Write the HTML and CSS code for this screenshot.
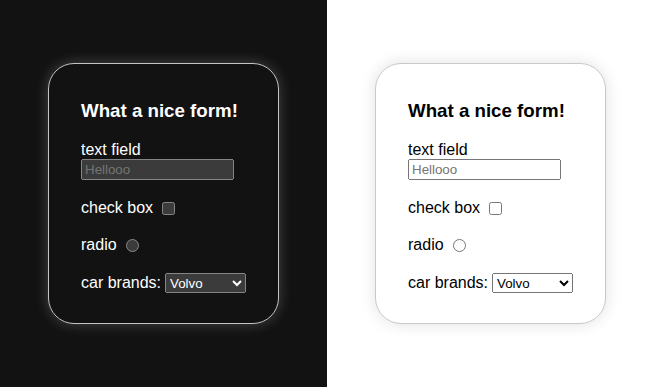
FILE: index.html
```html
<!DOCTYPE html>
<html lang="en">
<head>
    <meta charset="UTF-8">
    <meta name="viewport" content="width=device-width, initial-scale=1.0">
    <title>What a nice form!</title>
    <link rel="stylesheet" href="styles.css">
</head>
<body>
    <div class="halves">
        <section class="half dark">
            <form class="card">
                <h3>What a nice form!</h3>
                <div class="field">
                    <label for="text-dark">text field</label>
                    <input type="text" id="text-dark" placeholder="Hellooo">
                </div>
                <div class="field inline">
                    <label for="check-dark">check box</label>
                    <input type="checkbox" id="check-dark">
                </div>
                <div class="field inline">
                    <label for="radio-dark">radio</label>
                    <input type="radio" id="radio-dark">
                </div>
                <div class="field inline">
                    <label for="cars-dark">car brands:</label>
                    <select id="cars-dark">
                        <option>Volvo</option>
                        <option>Saab</option>
                        <option>Audi</option>
                    </select>
                </div>
            </form>
        </section>

        <section class="half light">
            <form class="card">
                <h3>What a nice form!</h3>
                <div class="field">
                    <label for="text-light">text field</label>
                    <input type="text" id="text-light" placeholder="Hellooo">
                </div>
                <div class="field inline">
                    <label for="check-light">check box</label>
                    <input type="checkbox" id="check-light">
                </div>
                <div class="field inline">
                    <label for="radio-light">radio</label>
                    <input type="radio" id="radio-light">
                </div>
                <div class="field inline">
                    <label for="cars-light">car brands:</label>
                    <select id="cars-light">
                        <option>Volvo</option>
                        <option>Saab</option>
                        <option>Audi</option>
                    </select>
                </div>
            </form>
        </section>
    </div>
</body>
</html>
```

FILE: styles.css
```css
* {
    margin: 0;
    padding: 0;
    box-sizing: border-box;
}

body {
    font-family: 'Liberation Sans', Arial, sans-serif;
    font-size: 16px;
}

.halves {
    display: grid;
    grid-template-columns: 327px 1fr;
    height: 100vh;
}

.half {
    display: flex;
    align-items: center;
    justify-content: center;
}

.dark {
    color-scheme: dark;
    background: #121212;
    color: #fff;
}

.light {
    color-scheme: light;
    background: #fff;
    color: #000;
}

.card {
    width: 231px;
    height: 261px;
    padding: 36px 28px 30px 32px;
    border-radius: 26px;
    display: flex;
    flex-direction: column;
    gap: 19px;
}

.dark .card {
    border: 1px solid #c4c4c4;
    box-shadow: 0 0 14px rgba(255, 255, 255, 0.22);
}

.light .card {
    border: 1px solid #c8c8c8;
    box-shadow: 0 0 16px rgba(0, 0, 0, 0.12);
}

h3 {
    font-size: 18.72px;
    line-height: 22px;
    font-weight: bold;
    white-space: nowrap;
}

.field label {
    display: block;
    line-height: 18px;
    white-space: nowrap;
}

.field.inline {
    display: flex;
    align-items: center;
    min-height: 18px;
}

.field.inline label {
    display: inline;
}

input[type="text"] {
    width: 153px;
    height: 21px;
    padding: 1px 2px;
    font-family: 'Liberation Sans', Arial, sans-serif;
    font-size: 13.33px;
}

input[type="checkbox"],
input[type="radio"] {
    flex-shrink: 0;
    width: 13px;
    height: 13px;
    margin: 0 0 0 9px;
}

select {
    flex-shrink: 0;
    width: 81px;
    height: 20px;
    margin-left: 4px;
    font-family: 'Liberation Sans', Arial, sans-serif;
    font-size: 13.33px;
}
```
